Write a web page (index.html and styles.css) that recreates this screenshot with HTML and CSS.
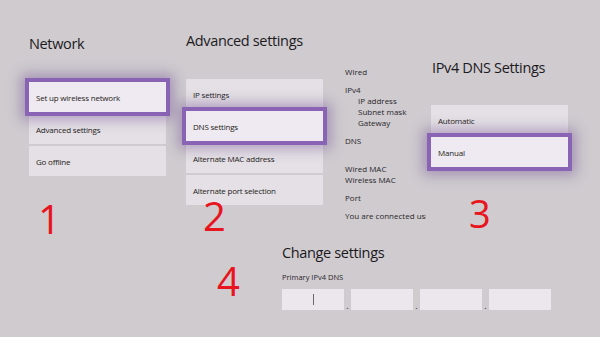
FILE: index.html
```html
<!DOCTYPE html>
<html>
<head>
<meta charset="utf-8">
<link rel="stylesheet" href="styles.css">
</head>
<body>
<div class="screen">
  <div class="top">
    <section class="col col-network">
      <h2 class="title">Network</h2>
      <ul class="menu">
        <li class="item selected">Set up wireless network</li>
        <li class="item">Advanced settings</li>
        <li class="item">Go offline</li>
      </ul>
    </section>
    <section class="col col-advanced">
      <h2 class="title">Advanced settings</h2>
      <ul class="menu">
        <li class="item">IP settings</li>
        <li class="item selected">DNS settings</li>
        <li class="item">Alternate MAC address</li>
        <li class="item">Alternate port selection</li>
      </ul>
    </section>
    <section class="info">
      <div class="group"><div>Wired</div></div>
      <div class="group">
        <div>IPv4</div>
        <div class="indent">IP address</div>
        <div class="indent">Subnet mask</div>
        <div class="indent">Gateway</div>
      </div>
      <div class="group group-dns"><div>DNS</div></div>
      <div class="group">
        <div>Wired MAC</div>
        <div>Wireless MAC</div>
      </div>
      <div class="group"><div>Port</div></div>
      <div class="group"><div class="clip">You are connected using a wired connection</div></div>
    </section>
    <section class="col col-dns">
      <h2 class="title">IPv4 DNS Settings</h2>
      <ul class="menu">
        <li class="item">Automatic</li>
        <li class="item selected">Manual</li>
      </ul>
    </section>
  </div>
  <section class="change">
    <h2 class="title">Change settings</h2>
    <div class="label">Primary IPv4 DNS</div>
    <div class="octets">
      <div class="box"><span class="cursor"></span></div>
      <span class="dot">.</span>
      <div class="box"></div>
      <span class="dot">.</span>
      <div class="box"></div>
      <span class="dot">.</span>
      <div class="box"></div>
    </div>
  </section>
  <span class="num num-1">1</span>
  <span class="num num-2">2</span>
  <span class="num num-3">3</span>
  <span class="num num-4">4</span>
</div>
</body>
</html>
```
FILE: styles.css
```css
* { box-sizing: border-box; }
html, body { margin: 0; padding: 0; }
body {
  background: #cfcbcf;
  font-family: "Open Sans", "Noto Sans", sans-serif;
  color: #1f1d20;
}
.screen {
  position: relative;
  width: 600px;
  height: 337px;
  overflow: hidden;
  background: #cfcbcf;
}
.top {
  display: flex;
  align-items: flex-start;
  height: 243px;
  padding-left: 29px;
}
.title {
  margin: 0;
  font-size: 14.5px;
  font-weight: 400;
  line-height: 20px;
  letter-spacing: -0.35px;
  color: #1c1a1d;
  white-space: nowrap;
}
.col { width: 137px; flex: none; }
.col .title { margin-bottom: 28px; }
.col-network { padding-top: 34px; margin-right: 20px; }
.col-advanced { padding-top: 31px; margin-right: 22px; }
.col-dns { padding-top: 58px; }
.col-dns .title { margin-bottom: 27px; margin-left: 1px; }
.menu {
  list-style: none;
  margin: 0;
  padding: 0;
  display: flex;
  flex-direction: column;
  gap: 2px;
}
.item {
  height: 30px;
  display: flex;
  align-items: center;
  padding-left: 7px;
  padding-top: 1px;
  background: #e4e0e5;
  font-size: 8px;
  letter-spacing: -0.2px;
  color: #1e1c20;
  white-space: nowrap;
}
.item.selected {
  position: relative;
  z-index: 1;
  background: #efeaf1;
  box-shadow: 0 0 0 4px #8a64b4, 0 0 12px 8px rgba(105, 70, 140, 0.42);
}
.info {
  width: 81px;
  flex: none;
  margin-right: 5px;
  padding-top: 66px;
  white-space: nowrap;
  font-size: 8px;
  line-height: 11px;
  color: #29272a;
}
.clip { width: 81px; overflow: hidden; }
.group { margin-bottom: 7px; }
.group-dns { padding-bottom: 10px; }
.indent { padding-left: 13px; }
.change { padding-left: 282px; }
.label {
  margin-top: 9px;
  font-size: 7.5px;
  line-height: 11px;
  color: #29272a;
}
.octets {
  display: flex;
  align-items: flex-end;
  margin-top: 6px;
}
.box {
  width: 62px;
  height: 21px;
  background: #ebe7ec;
  display: flex;
  align-items: center;
  justify-content: center;
}
.cursor {
  width: 1px;
  height: 11px;
  background: #6a676b;
}
.dot {
  width: 7px;
  text-align: center;
  font-size: 9px;
  line-height: 8px;
  color: #333;
}
.num {
  position: absolute;
  font-family: "Open Sans", sans-serif;
  font-size: 40px;
  line-height: 24px;
  color: #e8141e;
}
.num-1 { left: 38px; top: 207px; }
.num-2 { left: 203px; top: 204px; }
.num-3 { left: 469px; top: 201px; font-size: 38px; }
.num-4 { left: 217px; top: 269px; }
```
